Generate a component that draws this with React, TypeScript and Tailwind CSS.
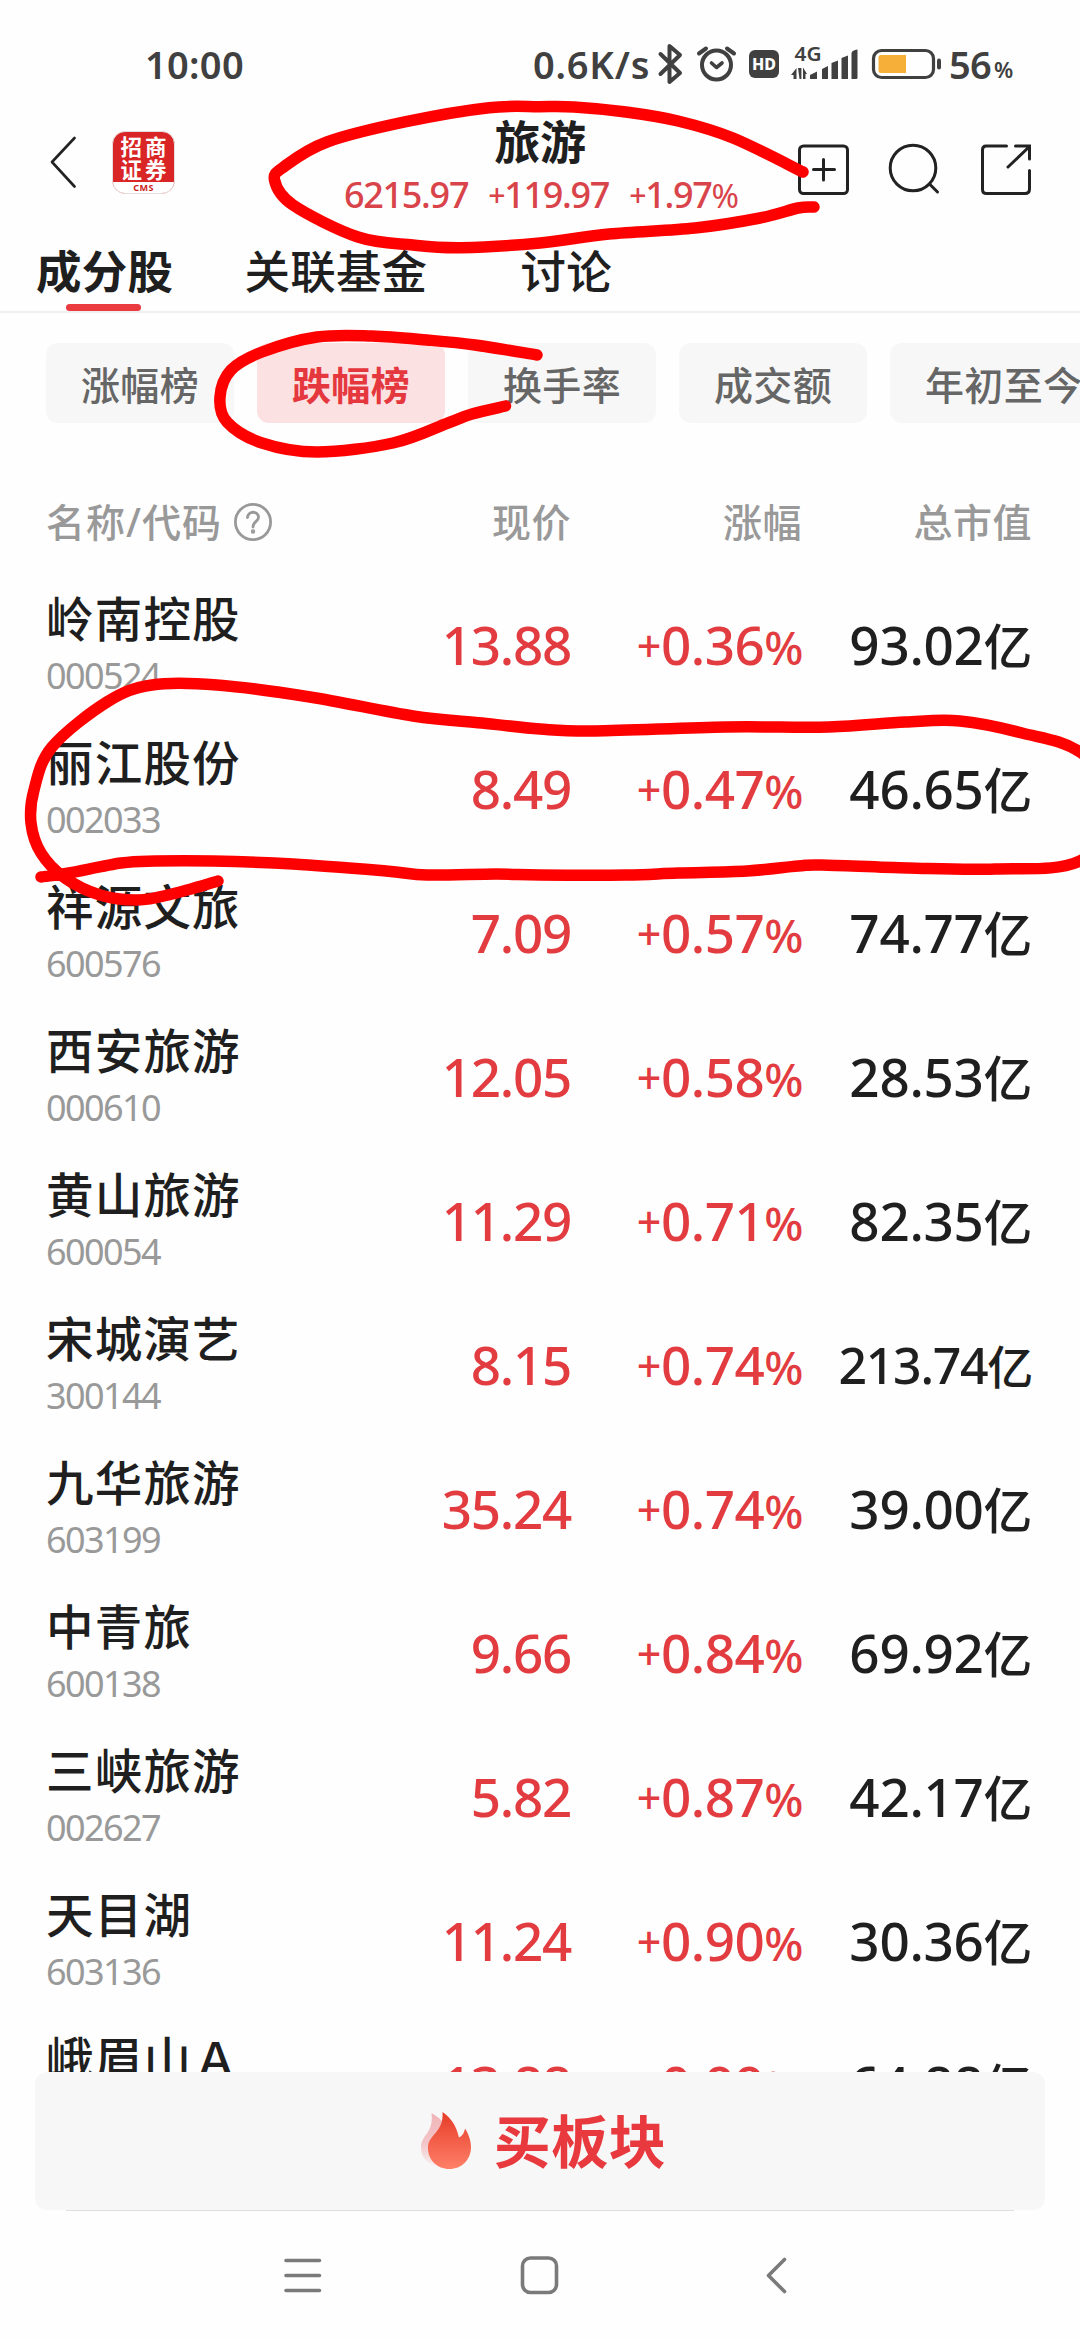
import React from "react";

type Stock = { name: string; code: string; price: string; change: string; cap: string };

const stocks: Stock[] = [
  { name: "岭南控股", code: "000524", price: "13.88", change: "0.36", cap: "93.02" },
  { name: "丽江股份", code: "002033", price: "8.49", change: "0.47", cap: "46.65" },
  { name: "祥源文旅", code: "600576", price: "7.09", change: "0.57", cap: "74.77" },
  { name: "西安旅游", code: "000610", price: "12.05", change: "0.58", cap: "28.53" },
  { name: "黄山旅游", code: "600054", price: "11.29", change: "0.71", cap: "82.35" },
  { name: "宋城演艺", code: "300144", price: "8.15", change: "0.74", cap: "213.74" },
  { name: "九华旅游", code: "603199", price: "35.24", change: "0.74", cap: "39.00" },
  { name: "中青旅", code: "600138", price: "9.66", change: "0.84", cap: "69.92" },
  { name: "三峡旅游", code: "002627", price: "5.82", change: "0.87", cap: "42.17" },
  { name: "天目湖", code: "603136", price: "11.24", change: "0.90", cap: "30.36" },
  { name: "峨眉山Ａ", code: "000888", price: "13.88", change: "0.99", cap: "64.88" },
];

const filters = ["涨幅榜", "跌幅榜", "换手率", "成交额", "年初至今"];

type Pt = [number, number];

const headerLoop: Pt[] = [
  [803, 172], [733, 138], [678, 121], [626, 112], [574, 107], [540, 106.7], [489, 107.7], [406, 121.7],
  [327, 142], [285, 166], [274.5, 180], [293, 205], [358, 237], [413, 245], [461, 247.7], [540, 243],
  [609, 234], [695, 228], [760, 218], [798, 208], [814, 207],
];
const filterLoop: Pt[] = [
  [537, 355], [475, 345], [427, 340], [372, 336], [317, 337], [262, 352], [231, 370], [220, 397],
  [227, 422], [262, 443], [317, 452], [393, 443], [448, 423], [472, 414], [505.5, 406],
];
const rowLoop: Pt[] = [
  [218, 881], [172, 894], [138, 900], [100, 895], [65, 878], [41, 853], [31, 823], [34, 790], [52, 747],
  [107, 702], [152, 685], [217, 685], [310, 697], [413, 716], [482, 723], [540, 729], [595, 731],
  [726, 727], [829, 727], [905, 722], [960, 721], [1022, 733], [1080, 752], [1130, 805], [1080, 861],
  [995, 869], [908, 868], [822, 865], [798, 866], [747, 871], [678, 873], [626, 875], [540, 875],
  [496, 874], [427, 875], [386, 871], [293, 864], [213, 861], [155, 861], [121, 863], [69, 873], [41, 877],
];

/** Catmull-Rom spline through the given points, as a cubic path. */
function smooth(p: Pt[]): string {
  let d = `M${p[0][0]} ${p[0][1]}`;
  for (let i = 0; i < p.length - 1; i++) {
    const a = p[Math.max(i - 1, 0)];
    const b = p[i];
    const c = p[i + 1];
    const e = p[Math.min(i + 2, p.length - 1)];
    d += `C${b[0] + (c[0] - a[0]) / 6} ${b[1] + (c[1] - a[1]) / 6} ${c[0] - (e[0] - b[0]) / 6} ${c[1] - (e[1] - b[1]) / 6} ${c[0]} ${c[1]}`;
  }
  return d;
}

function StatusBar() {
  return (
    <div className="flex h-[98px] items-center pt-[30px] pl-[145px] text-[38px] leading-[68px] font-semibold text-[#404040]">
      <span className="w-[388px] tracking-[0.3px]">10:00</span>
      <span className="w-[123px] tracking-[0.8px] whitespace-nowrap">0.6K/s</span>
      <svg className="h-[50px] w-[290px] shrink-0" viewBox="656 39 290 50" fill="none" stroke="#404040">
        <path d="M660.500 54 L680 73 L669.500 82 V46 L680 55 L660.500 74" strokeWidth="4" strokeLinejoin="round" strokeLinecap="round" />
        <circle cx="716.5" cy="65" r="14.5" strokeWidth="4" />
        <path d="M699 53.5 L706 48.5 M734 53.5 L727 48.5" strokeWidth="4" strokeLinecap="round" />
        <path d="M711.5 63 L716.5 67.5 L722 63" strokeWidth="3.6" strokeLinecap="round" strokeLinejoin="round" />
        <rect x="749" y="50" width="30" height="28" rx="6" fill="#404040" stroke="none" />
        <text x="764" y="70" textAnchor="middle" fontSize="16.5" fontWeight="800" fill="#fff" stroke="none" textLength="24" lengthAdjust="spacingAndGlyphs">HD</text>
        <text x="794.5" y="61" fontSize="19" fontWeight="600" fill="#404040" stroke="none" textLength="27" lengthAdjust="spacingAndGlyphs">4G</text>
        <g fill="#404040" stroke="none">
          <path d="M791 75 L796.5 68 V79 H793.5 V75Z M798 68h3.4v11H799.500z M803 79V67.500L807 74H805.500V79z" />
          <path d="M810 75 L817 71.500V79H810z M822 69 L828 66V79H822z M831.500 63 L838 60.500V79H831.500z M841.500 58 L848 55.500V79H841.500z M851.500 53 Q852 50 857.500 49.500V78Q857.500 79 856 79H851.500z" />
        </g>
        <rect x="873.5" y="50.500" width="60" height="27" rx="8" strokeWidth="3.200" />
        <path d="M881 55H906V73H881Q878.500 73 878.500 70.500V57.500Q878.500 55 881 55Z" fill="#f6b03a" stroke="none" />
        <path d="M939 60.500V67.500" strokeWidth="4" strokeLinecap="round" />
      </svg>
      <span className="ml-[3px] tracking-[-0.8px]">56</span>
      <span className="pt-[9px] pl-[3px] text-[22px]">%</span>
    </div>
  );
}

function BrokerLogo() {
  return (
    <div className="flex h-[63px] w-[63px] flex-col overflow-hidden rounded-[13px] border border-[#e6dede] bg-[#d92525]">
      <div className="flex h-[50px] flex-col items-center pt-[3px] pl-[3px] text-[21.500px] leading-[23px] font-bold tracking-[3px] text-white">
        <span>招商</span>
        <span>证券</span>
      </div>
      <div className="h-[11px] bg-white text-center text-[9px] leading-[11px] font-bold tracking-[0.500px] text-[#c22]">CMS</div>
    </div>
  );
}

const Plus = () => <span className="align-[2px] text-[0.84em] leading-none">+</span>;

function Header() {
  return (
    <header className="grid h-[144px] grid-cols-[174px_1fr_282px]">
      <div className="flex items-start gap-[36px] pt-[33px] pl-[50px]">
        <svg className="mt-[4px] h-[54px] w-[26px] shrink-0" viewBox="0 0 26 54" fill="none" stroke="#222" strokeWidth="2.600" strokeLinecap="round" strokeLinejoin="round">
          <path d="M24.500 3 L2 27 L24.500 51.500" />
        </svg>
        <div className="shrink-0">
          <BrokerLogo />
        </div>
      </div>
      <div className="flex flex-col items-center pt-[15px] pl-[108px]">
        <h1 className="text-[46px] leading-[56px] font-bold tracking-[-0.5px] text-[#1f1f1f]">旅游</h1>
        <p className="flex gap-[20px] text-[36px] leading-[52px] font-medium tracking-[-1.300px] whitespace-nowrap text-[#d9434a]">
          <span>6215.97</span>
          <span><Plus />119.97</span>
          <span><Plus />1.97<span className="text-[0.92em] font-normal tracking-[-3px]">%</span></span>
        </p>
      </div>
      <svg className="h-[144px] w-[282px]" viewBox="798 98 282 144" fill="none" stroke="#222" strokeWidth="3" strokeLinecap="round">
        <rect x="799.500" y="146" width="48" height="47.500" rx="4" />
        <path d="M813.500 169.500H834.500M823.500 159.500V180" />
        <circle cx="913" cy="168" r="22.800" />
        <path d="M929.500 184 L937.500 192" />
        <path d="M1006.500 146H986Q982.500 146 982.500 150V189.500Q982.500 193.500 986.500 193.500H1025Q1029.500 193.500 1029.500 189V170.500M1015.500 146H1029.500V159M1029 147 L1008 167" />
      </svg>
    </header>
  );
}

function Tabs() {
  return (
    <nav className="flex h-[71px] border-b-2 border-[#f0f0f0] pl-[36px] text-[45.500px] leading-[58px] font-medium tracking-[0.200px] whitespace-nowrap text-[#1f1f1f]">
      <div className="flex w-[208.500px] flex-col">
        <span className="font-bold">成分股</span>
        <span className="mt-[4px] ml-[30px] h-[8px] w-[75px] rounded-[4px] bg-[#e93b40]" />
      </div>
      <span className="w-[276px]">关联基金</span>
      <span>讨论</span>
    </nav>
  );
}

function Filters() {
  return (
    <div className="flex h-[142px] items-start gap-[23px] overflow-hidden pt-[30px] pl-[46px]">
      {filters.map((f) => (
        <div
          key={f}
          className={
            "flex h-[80px] shrink-0 items-center rounded-[12px] px-[35px] pt-[3px] text-[39px] leading-none tracking-[0.330px] whitespace-nowrap " +
            (f === "跌幅榜" ? "bg-[#fce1e3] font-bold text-[#e5383e]" : "bg-[#f7f7f7] font-medium text-[#666]")
          }
        >
          {f}
        </div>
      ))}
    </div>
  );
}

const columns = "grid grid-cols-[300px_225px_231px_1fr] pl-[46px] pr-[48px]";

function TableHead() {
  return (
    <div className={columns + " h-[119px] items-start pt-[36px] text-[39px] leading-[62px] font-medium tracking-[0.500px] whitespace-nowrap text-[#999]"}>
      <span className="flex items-center gap-[11px] tracking-[1px]">
        名称/代码
        <svg className="h-[40px] w-[40px]" viewBox="0 0 40 40" fill="none" stroke="#999" strokeWidth="2.800" strokeLinecap="round">
          <circle cx="20" cy="20" r="17.600" />
          <path d="M14.500 15.500C15 8.500 25.500 8.500 25.500 15.500C25.500 19.500 20 19.500 20 25" />
          <circle cx="20" cy="29.500" r="0.800" fill="#999" />
        </svg>
      </span>
      <span className="text-right">现价</span>
      <span className="text-right">涨幅</span>
      <span className="text-right">总市值</span>
    </div>
  );
}

function Row({ s }: { s: Stock }) {
  return (
    <div className={columns + " h-[144px] whitespace-nowrap"}>
      <div className="pt-[15px]">
        <div className="text-[47.500px] leading-[60px] font-medium tracking-[1.200px] text-[#1f1f1f]">{s.name}</div>
        <div className="pt-px text-[36px] leading-[52px] tracking-[-1.600px] text-[#999]">{s.code}</div>
      </div>
      <div className="text-right text-[53px] leading-[142px] font-medium tracking-[-1.300px] text-[#e23c41]">{s.price}</div>
      <div className="text-right text-[53px] leading-[142px] font-medium tracking-[-0.500px] text-[#e23c41]">
        <span className="align-[3px] text-[43px] leading-none">+</span>
        {s.change}
        <span className="text-[46px] tracking-[-1.500px]">%</span>
      </div>
      <div
        className={
          "text-right leading-[142px] font-medium text-[#1f1f1f] " +
          (s.cap.length > 5 ? "text-[50px] tracking-[-1.300px]" : "text-[53px] tracking-[-0.300px]")
        }
      >
        {s.cap}
        <span className="text-[0.92em]">亿</span>
      </div>
    </div>
  );
}

function BuyButton() {
  return (
    <div className="px-[35px]">
      <button className="flex h-[138px] w-full items-center justify-center gap-[22px] rounded-[12px] bg-[#f7f7f7] pl-[6px]">
        <svg className="h-[60px] w-[52px]" viewBox="0 0 52 60">
          <defs>
            <linearGradient id="flame" x1="0" y1="0" x2="0" y2="1">
              <stop offset="0" stopColor="#e63c28" />
              <stop offset="1" stopColor="#ff8068" />
            </linearGradient>
            <linearGradient id="shade" x1="0" y1="0" x2="0" y2="1">
              <stop offset="0" stopColor="#f0b4b8" />
              <stop offset="0.550" stopColor="#f3c4c7" />
              <stop offset="1" stopColor="#f7f0f0" />
            </linearGradient>
          </defs>
          <path d="M11.500 2C24 9 27 16 27 25L20 55C8 55 1 46 1 37C1 23 14 23 11.500 2Z" fill="url(#shade)" />
          <path d="M22.500 1C31 7 36 14 39 26.500C43 24.500 44.500 21 45 17.500C48 22 51 29 51 36C51 49 41.500 58 29.500 58C17 58 8 49 8 37C8 23 24 22 22.500 1Z" fill="url(#flame)" />
        </svg>
        <span className="text-[57px] leading-none font-bold tracking-[0.500px] text-[#e8393e]">买板块</span>
      </button>
      <div className="mx-[31px] h-px bg-[#dedede]" />
    </div>
  );
}

function SystemNav() {
  return (
    <svg className="h-[129px] w-full" viewBox="0 2211 1080 129" fill="none" stroke="#7a7a7a" strokeWidth="3.600" strokeLinecap="round" strokeLinejoin="round">
      <path d="M286 2260.500H319.500M286 2275.500H319.500M286 2290.500H319.500" />
      <rect x="522.500" y="2258" width="34" height="34.500" rx="8" />
      <path d="M784.500 2259.500 L768.500 2275.500 L784.500 2291.500" />
    </svg>
  );
}

export default function App() {
  return (
    <main className="relative flex h-[2340px] w-[1080px] flex-col overflow-hidden bg-[#fefefe] font-['Noto_Sans','Noto_Sans_CJK_SC',sans-serif]">
      <StatusBar />
      <Header />
      <Tabs />
      <Filters />
      <TableHead />
      <section className="h-[1498px] shrink-0 overflow-hidden">
        {stocks.map((s) => (
          <Row key={s.code} s={s} />
        ))}
      </section>
      <BuyButton />
      <SystemNav />
      <svg className="pointer-events-none absolute inset-0 h-[2340px] w-[1080px]" viewBox="0 0 1080 2340" fill="none" stroke="#ff0000" strokeWidth="11.500" strokeLinecap="round" strokeLinejoin="round">
        <path d={smooth(headerLoop)} />
        <path d={smooth(filterLoop)} />
        <path d={smooth(rowLoop)} />
      </svg>
    </main>
  );
}
